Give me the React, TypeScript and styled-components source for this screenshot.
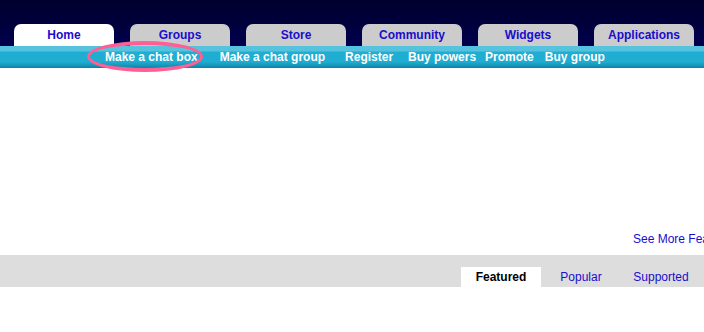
import React from 'react'
import styled, { createGlobalStyle } from 'styled-components'

const GlobalStyle = createGlobalStyle`
  html, body {
    margin: 0;
    padding: 0;
    background: #fff;
    overflow: hidden;
  }
  body {
    font-family: "Liberation Sans", Arial, sans-serif;
    font-size: 12px;
  }
`

const mainTabs = ['Home', 'Groups', 'Store', 'Community', 'Widgets', 'Applications']

// left gap before each sub-nav link, taken from the original spacing
const subLinks = [
  { label: 'Make a chat box', gap: 105 },
  { label: 'Make a chat group', gap: 22 },
  { label: 'Register', gap: 20 },
  { label: 'Buy powers', gap: 15 },
  { label: 'Promote', gap: 9 },
  { label: 'Buy group', gap: 11 },
]

const listTabs = ['Featured', 'Popular', 'Supported']

const App: React.FC = () => {
  return (
    <Page>
      <GlobalStyle />
      <Header>
        {mainTabs.map((t, i) => (
          <Tab key={t} $active={i === 0}>{t}</Tab>
        ))}
      </Header>

      <SubNav>
        {subLinks.map((l, i) => (
          <SubLink key={l.label} $gap={l.gap}>
            {l.label}
            {i === 0 && <Highlight />}
          </SubLink>
        ))}
      </SubNav>

      <Content>
        <SeeMore>See More Featured</SeeMore>
      </Content>

      <ListBar>
        {listTabs.map((t, i) => (
          <ListTab key={t} $active={i === 0}>{t}</ListTab>
        ))}
      </ListBar>
    </Page>
  )
}

const Page = styled.div`
  width: 704px;
  height: 332px;
  overflow: hidden;
  display: flex;
  flex-direction: column;
`

const Header = styled.div`
  height: 46px;
  display: flex;
  align-items: flex-end;
  gap: 16px;
  padding-left: 14px;
  background: linear-gradient(to bottom, #00002e 0%, #00003c 50%, #000050 100%);
`

const Tab = styled.div<{ $active?: boolean }>`
  width: 100px;
  height: 22px;
  flex: none;
  border-radius: 7px 7px 0 0;
  background: ${(p) => (p.$active ? '#ffffff' : '#cccccc')};
  color: #1a0dcc;
  font-weight: bold;
  font-size: 12px;
  line-height: 22px;
  text-align: center;
`

const SubNav = styled.div`
  height: 22px;
  display: flex;
  align-items: center;
  background: linear-gradient(
    to bottom,
    #55c3de 0px,
    #55c3de 5px,
    #1fadd2 6px,
    #1fadd2 16px,
    #1492b4 20px,
    #107f9c 22px
  );
`

const SubLink = styled.span<{ $gap: number }>`
  position: relative;
  margin-left: ${(p) => p.$gap}px;
  color: #ffffff;
  font-weight: bold;
  font-size: 12px;
  line-height: 22px;
  white-space: nowrap;
`

const Highlight = styled.span`
  position: absolute;
  left: -18px;
  top: -5px;
  width: 110px;
  height: 23px;
  border: 4px solid #ff5f95;
  border-left-width: 3px;
  border-right-width: 3px;
  border-radius: 50%;
  pointer-events: none;
`

const Content = styled.div`
  height: 187px;
  display: flex;
  flex-direction: column;
  justify-content: flex-end;
  background: #fff;
`

const SeeMore = styled.a`
  margin-left: 633px;
  margin-bottom: 9px;
  color: #1a0dcc;
  font-size: 12px;
  line-height: 14px;
  white-space: nowrap;
  text-decoration: none;
`

const ListBar = styled.div`
  height: 32px;
  display: flex;
  align-items: flex-end;
  padding-left: 461px;
  background: #dddddd;
`

const ListTab = styled.div<{ $active?: boolean }>`
  width: 80px;
  height: 20px;
  flex: none;
  background: ${(p) => (p.$active ? '#ffffff' : 'transparent')};
  color: ${(p) => (p.$active ? '#000000' : '#1a0dcc')};
  font-weight: ${(p) => (p.$active ? 'bold' : 'normal')};
  font-size: 12px;
  line-height: 20px;
  text-align: center;
`

export default App
